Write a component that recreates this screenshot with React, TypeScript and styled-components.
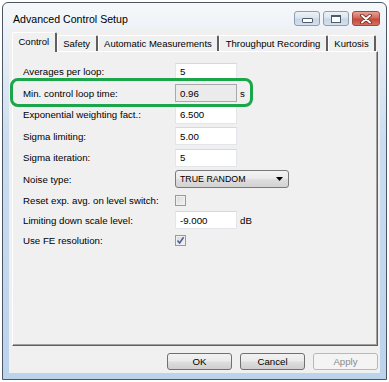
import React from "react";
import styled, { createGlobalStyle } from "styled-components";

const GlobalStyle = createGlobalStyle`
  html, body { margin: 0; padding: 0; background: #fff; }
  body { font-family: "Liberation Sans", Arial, sans-serif; color: #000; }
`;

type Field = {
    label: string;
    kind: "text" | "readonly" | "select" | "check";
    value?: string;
    unit?: string;
    checked?: boolean;
    h: number;
};

const fields: Field[] = [
    { label: "Averages per loop:", kind: "text", value: "5", h: 21 },
    { label: "Min. control loop time:", kind: "readonly", value: "0.96", unit: "s", h: 22 },
    { label: "Exponential weighting fact.:", kind: "text", value: "6.500", h: 21 },
    { label: "Sigma limiting:", kind: "text", value: "5.00", h: 22 },
    { label: "Sigma iteration:", kind: "text", value: "5", h: 21 },
    { label: "Noise type:", kind: "select", value: "TRUE RANDOM", h: 22 },
    { label: "Reset exp. avg. on level switch:", kind: "check", checked: false, h: 20 },
    { label: "Limiting down scale level:", kind: "text", value: "-9.000", unit: "dB", h: 20 },
    { label: "Use FE resolution:", kind: "check", checked: true, h: 20 },
];

const tabs = ["Control", "Safety", "Automatic Measurements", "Throughput Recording", "Kurtosis"];

const App = () => {
    return (
        <>
            <GlobalStyle />
            <Window>
                <TitleBar>
                    <Title>Advanced Control Setup</Title>
                    <CaptionButtons>
                        <CaptionButton>
                            <MinGlyph />
                        </CaptionButton>
                        <CaptionButton>
                            <MaxGlyph />
                        </CaptionButton>
                        <CaptionButton close>
                            <svg width="12" height="10" viewBox="0 0 12 10">
                                <path d="M2 1.5 L10 8.5 M10 1.5 L2 8.5" stroke="#6b1f16" strokeWidth="3.6" strokeLinecap="round" />
                                <path d="M2 1.5 L10 8.5 M10 1.5 L2 8.5" stroke="#fff" strokeWidth="2" strokeLinecap="round" />
                            </svg>
                        </CaptionButton>
                    </CaptionButtons>
                </TitleBar>
                <Client>
                    <TabStrip>
                        {tabs.map((t, i) => (
                            <Tab key={t} active={i === 0}>
                                {t}
                            </Tab>
                        ))}
                    </TabStrip>
                    <Panel>
                        {fields.map((f) => (
                            <FieldRow key={f.label} h={f.h}>
                                <Label>{f.label}</Label>
                                <Control>{renderControl(f)}</Control>
                            </FieldRow>
                        ))}
                        <Highlight />
                    </Panel>
                    <Footer>
                        <DlgButton>OK</DlgButton>
                        <DlgButton>Cancel</DlgButton>
                        <DlgButton disabled>Apply</DlgButton>
                    </Footer>
                </Client>
            </Window>
        </>
    );
};

function renderControl(f: Field) {
    if (f.kind === "select") {
        return (
            <Select>
                <span>{f.value}</span>
                <svg width="7" height="4" viewBox="0 0 7 4">
                    <path d="M0 0 H7 L3.5 4 Z" fill="#000" />
                </svg>
            </Select>
        );
    }
    if (f.kind === "check") {
        return (
            <CheckBox>
                {f.checked && (
                    <svg width="9" height="9" viewBox="0 0 9 9">
                        <path d="M1.5 4.5 L3.6 7 L7.6 1.2" stroke="#4a5d9a" strokeWidth="1.5" fill="none" />
                    </svg>
                )}
            </CheckBox>
        );
    }
    return (
        <>
            <TextBox readonly={f.kind === "readonly"}>{f.value}</TextBox>
            {f.unit && <Unit>{f.unit}</Unit>}
        </>
    );
}

export default App;

const Window = styled.div`
    margin: 2px;
    width: 385px;
    height: 378px;
    box-sizing: border-box;
    border: 1px solid #4a5565;
    border-radius: 6px 6px 0 0;
    padding: 0 6px 6px 6px;
    display: flex;
    flex-direction: column;
    background: linear-gradient(
        to bottom,
        #f6f8fa 0px,
        #e9eff6 40px,
        #cbdcef 140px,
        #bcd3ec 100%
    );
`;

const TitleBar = styled.div`
    height: 26px;
    box-sizing: border-box;
    padding: 5px 0 0 4px;
    display: flex;
    align-items: center;
    justify-content: space-between;
`;

const Title = styled.span`
    font-size: 10.6px;
    color: #000;
`;

const CaptionButtons = styled.div`
    display: flex;
    gap: 3px;
    align-items: center;
`;

const CaptionButton = styled.div<{ close?: boolean }>`
    width: ${(p) => (p.close ? "28px" : "26px")};
    height: 15px;
    box-sizing: border-box;
    border: 1px solid ${(p) => (p.close ? "#9a4a40" : "#8d9db3")};
    border-radius: 3px;
    display: flex;
    align-items: center;
    justify-content: center;
    background: ${(p) =>
        p.close
            ? "linear-gradient(to bottom, #e6a193 0%, #d46a5b 45%, #c44a3a 55%, #d5705d 100%)"
            : "linear-gradient(to bottom, #eef2f7 0%, #dbe4ef 45%, #c8d5e4 55%, #d6e0ec 100%)"};
`;

const MinGlyph = styled.div`
    width: 9px;
    height: 3px;
    margin-top: 4px;
    background: #fff;
    border: 1px solid #4d5b6e;
    border-radius: 1px;
`;

const MaxGlyph = styled.div`
    width: 8px;
    height: 5px;
    border: 1px solid #4d5b6e;
    border-top-width: 2px;
    background: #fff;
`;

const Client = styled.div`
    flex: 1;
    background: #f0f0f0;
    padding: 3px 2px 0 3px;
    display: flex;
    flex-direction: column;
`;

const TabStrip = styled.div`
    display: flex;
    align-items: flex-end;
    height: 19px;
    padding-left: 1px;
    position: relative;
    z-index: 1;
`;

const Tab = styled.div<{ active?: boolean }>`
    flex-shrink: 0;
    white-space: nowrap;
    font-size: 9.5px;
    padding: 0 5.5px;
    box-sizing: border-box;
    height: ${(p) => (p.active ? "20px" : "16px")};
    margin: ${(p) => (p.active ? "0 0 -1px -1px" : "0")};
    display: flex;
    align-items: center;
    padding-bottom: ${(p) => (p.active ? "2px" : "0")};
    background: #f0f0f0;
    border-left: 1px solid #fff;
    border-top: 1px solid #fff;
    border-right: 2px solid #5f5f5f;
    border-radius: 2px 2px 0 0;
`;

const Panel = styled.div`
    position: relative;
    height: 295px;
    box-sizing: border-box;
    border-top: 1px solid #fff;
    border-left: 1px solid #fff;
    border-right: 1px solid #5f5f5f;
    border-bottom: 1px solid #5f5f5f;
    box-shadow: inset -1px -1px 0 #a0a0a0;
    padding: 9px 0 0 10px;
`;

const FieldRow = styled.div<{ h: number }>`
    height: ${(p) => p.h}px;
    display: grid;
    grid-template-columns: 152px auto;
    align-items: center;
`;

const Label = styled.span`
    font-size: 9.7px;
    white-space: nowrap;
`;

const Control = styled.div`
    display: flex;
    align-items: center;
`;

const TextBox = styled.div<{ readonly?: boolean }>`
    width: 62px;
    height: 18px;
    box-sizing: border-box;
    padding-left: 4px;
    display: flex;
    align-items: center;
    font-size: 9.7px;
    background: ${(p) => (p.readonly ? "#ebebeb" : "#fff")};
    border: 1px solid ${(p) => (p.readonly ? "#a9a9a9" : "#e2e5ea")};
    border-top-color: ${(p) => (p.readonly ? "#a9a9a9" : "#d5d9de")};
`;

const Unit = styled.span`
    font-size: 9.7px;
    margin-left: 3px;
`;

const Select = styled.div`
    width: 114px;
    height: 18px;
    box-sizing: border-box;
    border: 1px solid #7a7a7a;
    border-radius: 3px;
    padding: 0 5px 0 4px;
    display: flex;
    align-items: center;
    justify-content: space-between;
    font-size: 8.8px;
    background: linear-gradient(to bottom, #f4f4f4 0%, #ebebeb 45%, #dddddd 55%, #d3d3d3 100%);
`;

const CheckBox = styled.div`
    width: 11px;
    height: 11px;
    box-sizing: border-box;
    border: 1px solid #9a9a9a;
    display: flex;
    align-items: center;
    justify-content: center;
    background: linear-gradient(135deg, #d8d8d8 0%, #f4f4f4 100%);
    box-shadow: inset 0 0 0 1px #f0f0f0;
`;

const Highlight = styled.div`
    position: absolute;
    left: -3px;
    top: 26px;
    width: 243px;
    height: 29px;
    box-sizing: border-box;
    border: 3.5px solid #1ba64b;
    border-radius: 8px;
    pointer-events: none;
`;

const Footer = styled.div`
    display: flex;
    justify-content: flex-end;
    gap: 8px;
    padding: 7px 0 0 0;
`;

const DlgButton = styled.div<{ disabled?: boolean }>`
    width: 65px;
    height: 17px;
    box-sizing: border-box;
    border: 1px solid ${(p) => (p.disabled ? "#b5b9bc" : "#707070")};
    border-radius: 3px;
    display: flex;
    align-items: center;
    justify-content: center;
    font-size: 9.7px;
    color: ${(p) => (p.disabled ? "#8a8a8a" : "#000")};
    background: ${(p) =>
        p.disabled
            ? "#f4f4f4"
            : "linear-gradient(to bottom, #f2f2f2 0%, #ebebeb 45%, #dddddd 55%, #cfcfcf 100%)"};
`;
